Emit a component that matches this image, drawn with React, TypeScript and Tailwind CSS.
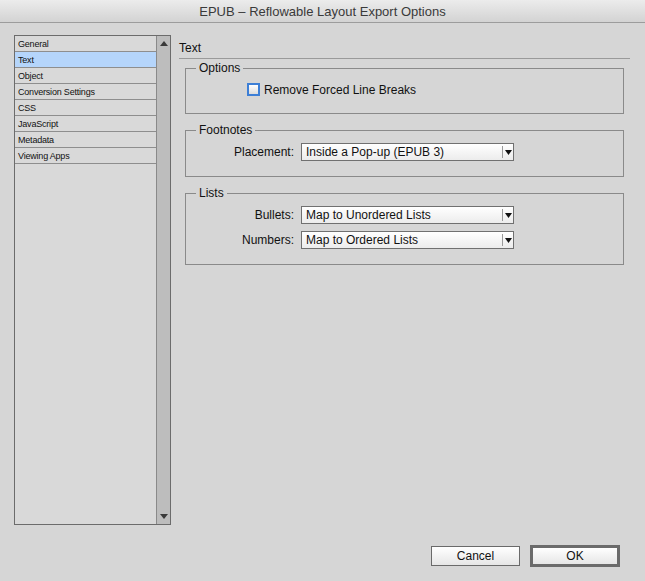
import React from 'react'

const items = ['General', 'Text', 'Object', 'Conversion Settings', 'CSS', 'JavaScript', 'Metadata', 'Viewing Apps']

function Arrow({ up }: { up?: boolean }) {
  return (
    <svg width="8" height="5" viewBox="0 0 8 5" className="block">
      <path d={up ? 'M0 5 L4 0 L8 5 Z' : 'M0 0 L8 0 L4 5 Z'} fill="#3a3a3a" />
    </svg>
  )
}

function Select({ value }: { value: string }) {
  return (
    <div className="flex h-[18px] w-[213px] items-center border border-[#707070] bg-gradient-to-b from-[#ffffff] to-[#ececec]">
      <span className="flex-1 pl-[4px] text-[12px] leading-[16px] text-[#111]">{value}</span>
      <span className="h-[12px] w-px bg-[#9a9a9a]" />
      <span className="flex w-[10px] items-center justify-center">
        <svg width="7" height="5" viewBox="0 0 7 5" className="block">
          <path d="M0 0 L7 0 L3.5 5 Z" fill="#111" />
        </svg>
      </span>
    </div>
  )
}

function Group({ title, children, className }: { title: string; children: React.ReactNode; className?: string }) {
  return (
    <fieldset className={`ml-[6px] w-[439px] border border-[#8a8a8a] ${className ?? ''}`}>
      <legend className="ml-[10px] px-[3px] text-[12px] leading-[14px] text-[#111]">{title}</legend>
      {children}
    </fieldset>
  )
}

function Row({ label, value }: { label: string; value: string }) {
  return (
    <div className="flex items-center">
      <span className="w-[109px] pr-[1px] text-right text-[12px] leading-[14px] text-[#111]">{label}</span>
      <span className="w-[6px]" />
      <Select value={value} />
    </div>
  )
}

export default function App() {
  return (
    <div
      className="flex h-[581px] w-[645px] flex-col bg-[#d6d6d6]"
      style={{ fontFamily: '"Liberation Sans", Arial, sans-serif' }}
    >
      {/* barra de título */}
      <div className="flex h-[23px] items-center justify-center border-b border-[#9c9c9c] bg-gradient-to-b from-[#ececec] to-[#d3d3d3] pt-[1px]">
        <span className="text-[13px] leading-[16px] text-[#3a3a3a]">EPUB – Reflowable Layout Export Options</span>
      </div>

      <div className="flex pl-[14px] pt-[12px]">
        {/* lista lateral */}
        <div className="flex h-[490px] w-[157px] border border-[#6c6c6c] bg-[#d9d9d9]">
          <div className="flex-1">
            {items.map(item => (
              <div
                key={item}
                className={`h-[16px] border-b border-[#8e8e8e] pl-[3px] pt-[2px] text-[9px] leading-[13px] tracking-[-0.2px] text-[#111] ${
                  item === 'Text' ? 'bg-[#b5d5fb]' : ''
                }`}
              >
                {item}
              </div>
            ))}
          </div>
          <div className="flex w-[14px] flex-col items-center justify-between border-l border-[#8a8a8a] bg-[#bdbdbd] py-[5px]">
            <Arrow up />
            <Arrow />
          </div>
        </div>

        {/* panel derecho */}
        <div className="ml-[8px] w-[451px] pt-[6px]">
          <div className="h-[18px] border-b border-[#9a9a9a] text-[12px] leading-[14px] text-[#111]">Text</div>

          <Group title="Options" className="mt-[2px]">
            <div className="flex h-[15px] items-center pl-[61px]" style={{ marginTop: 7, marginBottom: 16 }}>
              <span className="h-[13px] w-[13px] border-2 border-[#3d7fd6] bg-gradient-to-b from-[#ffffff] to-[#dcdcdc]" />
              <span className="ml-[4px] text-[12px] leading-[14px] text-[#111]">Remove Forced Line Breaks</span>
            </div>
          </Group>

          <Group title="Footnotes" className="mt-[9px]">
            <div className="pb-[15px] pt-[6px]">
              <Row label="Placement:" value="Inside a Pop-up (EPUB 3)" />
            </div>
          </Group>

          <Group title="Lists" className="mt-[9px]">
            <div className="flex flex-col gap-[7px] pb-[15px] pt-[6px]">
              <Row label="Bullets:" value="Map to Unordered Lists" />
              <Row label="Numbers:" value="Map to Ordered Lists" />
            </div>
          </Group>
        </div>
      </div>

      {/* botones */}
      <div className="mt-[20px] flex items-center justify-end gap-[10px] pr-[25px]">
        <button className="h-[20px] w-[89px] border border-[#6a6a6a] bg-gradient-to-b from-[#ffffff] to-[#e6e6e6] text-[12px] leading-[14px] text-[#111]">
          Cancel
        </button>
        <button className="h-[22px] w-[90px] border-[3px] border-[#6b6b6b] bg-gradient-to-b from-[#ffffff] to-[#e6e6e6] text-[12px] leading-[14px] text-[#111]">
          OK
        </button>
      </div>
    </div>
  )
}
